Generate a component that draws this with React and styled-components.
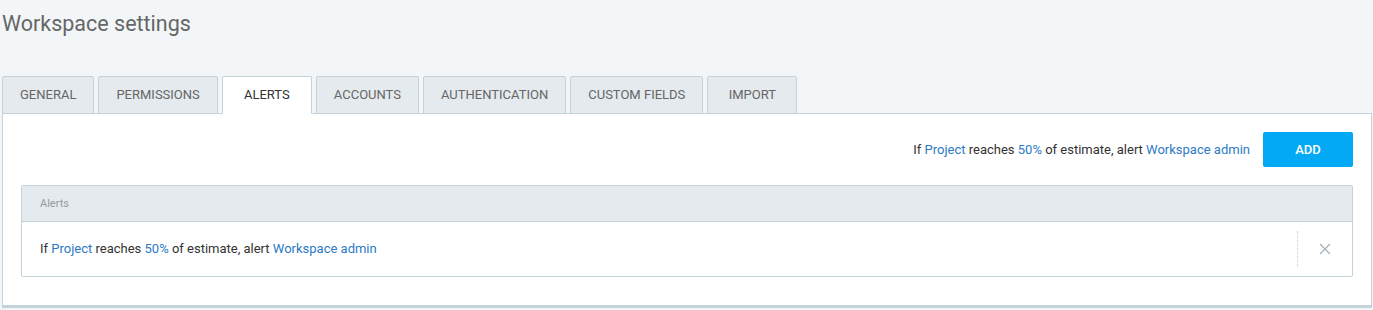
import styled, { createGlobalStyle } from 'styled-components';

const TABS = ['General', 'Permissions', 'Alerts', 'Accounts', 'Authentication', 'Custom fields', 'Import'];

const GlobalStyle = createGlobalStyle`
    body {
        margin: 0;
        background: #f2f6f8;
        font-family: Roboto, "Liberation Sans", sans-serif;
        color: #333;
    }
`;

export default function App() {
    return (
        <Page>
            <GlobalStyle />
            <Title>Workspace settings</Title>
            <TabBar>
                {TABS.map(tab => (
                    <Tab key={tab} active={tab === 'Alerts'}>{tab}</Tab>
                ))}
            </TabBar>
            <Panel>
                <Toolbar>
                    <AlertText />
                    <AddButton>Add</AddButton>
                </Toolbar>
                <Table>
                    <TableHeader>Alerts</TableHeader>
                    <Row>
                        <RowText><AlertText /></RowText>
                        <RowAction>
                            <CloseIcon />
                        </RowAction>
                    </Row>
                </Table>
            </Panel>
        </Page>
    );
}

function AlertText() {
    return (
        <Sentence>
            If <Link>Project</Link> reaches <Link>50%</Link> of estimate, alert <Link>Workspace admin</Link>
        </Sentence>
    );
}

function CloseIcon() {
    return (
        <svg width="12" height="12" viewBox="0 0 12 12" fill="none">
            <path d="M1 1L11 11M11 1L1 11" stroke="#a3b0b8" strokeWidth="1.2" />
        </svg>
    );
}

const Page = styled.div`
    padding: 0 1px 0 2px;
`;

const Title = styled.h1`
    margin: 0;
    padding: 11px 0 0;
    height: 76px;
    box-sizing: border-box;
    font-size: 21.5px;
    font-weight: 400;
    color: #666;
`;

const TabBar = styled.div`
    display: flex;
    gap: 4px;
    align-items: flex-end;
    position: relative;
    z-index: 1;
    margin-bottom: -1px;
`;

const Tab = styled.div`
    min-width: 90px;
    box-sizing: border-box;
    text-align: center;
    padding: 0 17px;
    height: 38px;
    line-height: 36px;
    font-size: 13px;
    text-transform: uppercase;
    color: ${p => p.active ? '#333' : '#666'};
    background: ${p => p.active ? '#fff' : '#e4eaee'};
    border: 1px solid #c6d2d9;
    border-bottom-color: ${p => p.active ? '#fff' : '#c6d2d9'};
    border-radius: 2px 2px 0 0;
`;

const Panel = styled.div`
    background: #fff;
    border: 1px solid #c6d2d9;
    border-bottom: 3px solid #c6d2d9;
    padding: 18px 18px 28px;
`;

const Toolbar = styled.div`
    display: flex;
    justify-content: flex-end;
    align-items: center;
    gap: 13px;
    margin-bottom: 18px;
`;

const Sentence = styled.span`
    font-size: 13px;
    color: #333;
`;

const Link = styled.span`
    color: #2c7ac5;
`;

const AddButton = styled.button`
    width: 90px;
    height: 35px;
    border: none;
    border-radius: 2px;
    background: #03a9f4;
    color: #fff;
    font-family: inherit;
    font-size: 13px;
    font-weight: 500;
    text-transform: uppercase;
`;

const Table = styled.div`
    border: 1px solid #c6d2d9;
    border-radius: 2px;
`;

const TableHeader = styled.div`
    height: 35px;
    line-height: 35px;
    padding: 0 18px;
    background: #e4eaee;
    border-bottom: 1px solid #c6d2d9;
    font-size: 11px;
    color: #999;
`;

const Row = styled.div`
    display: flex;
    align-items: center;
    height: 54px;
`;

const RowText = styled.div`
    flex: 1;
    padding: 0 0 3px 18px;
`;

const RowAction = styled.div`
    display: flex;
    align-items: center;
    justify-content: center;
    width: 54px;
    height: 36px;
    border-left: 1px dotted #c6d2d9;
`;
